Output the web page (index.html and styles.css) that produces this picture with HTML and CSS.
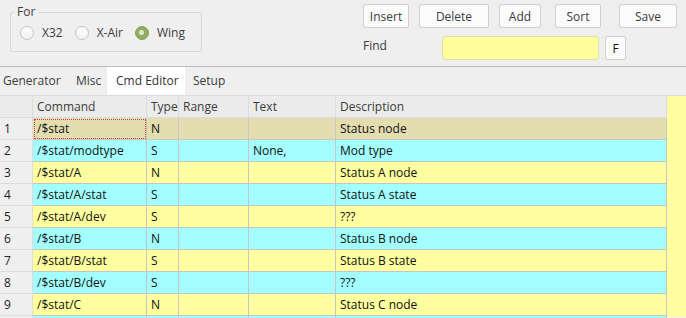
FILE: index.html
```html
<!DOCTYPE html>
<html lang="en">
<head>
  <meta charset="UTF-8" />
  <title>Cmd Editor</title>
  <link rel="stylesheet" href="styles.css">
</head>
<body>
<div class="window">
  <!-- Top bar: target selection + actions -->
  <div class="top">
    <fieldset class="group">
      <legend>For</legend>
      <label class="radio"><span class="dot"></span>X32</label>
      <label class="radio"><span class="dot"></span>X-Air</label>
      <label class="radio"><span class="dot on"></span>Wing</label>
    </fieldset>

    <div class="actions">
      <div class="buttons">
        <button class="btn insert">Insert</button>
        <button class="btn delete">Delete</button>
        <button class="btn add">Add</button>
        <button class="btn sort">Sort</button>
        <button class="btn save">Save</button>
      </div>
      <div class="find">
        <span class="find-label">Find</span>
        <input class="find-input" type="text">
        <button class="btn f">F</button>
      </div>
    </div>
  </div>

  <!-- Tabs -->
  <div class="tabs">
    <div class="tab">Generator</div>
    <div class="tab">Misc</div>
    <div class="tab active">Cmd Editor</div>
    <div class="tab">Setup</div>
  </div>

  <!-- Command table -->
  <div class="table">
    <div class="row head">
      <div class="cell num"></div>
      <div class="cell">Command</div>
      <div class="cell">Type</div>
      <div class="cell">Range</div>
      <div class="cell">Text</div>
      <div class="cell">Description</div>
    </div>
    <div class="row sel">
      <div class="cell num">1</div>
      <div class="cell focus">/$stat</div>
      <div class="cell">N</div>
      <div class="cell"></div>
      <div class="cell"></div>
      <div class="cell">Status node</div>
    </div>
    <div class="row cyan">
      <div class="cell num">2</div>
      <div class="cell">/$stat/modtype</div>
      <div class="cell">S</div>
      <div class="cell"></div>
      <div class="cell">None,</div>
      <div class="cell">Mod type</div>
    </div>
    <div class="row yellow">
      <div class="cell num">3</div>
      <div class="cell">/$stat/A</div>
      <div class="cell">N</div>
      <div class="cell"></div>
      <div class="cell"></div>
      <div class="cell">Status A node</div>
    </div>
    <div class="row cyan">
      <div class="cell num">4</div>
      <div class="cell">/$stat/A/stat</div>
      <div class="cell">S</div>
      <div class="cell"></div>
      <div class="cell"></div>
      <div class="cell">Status A state</div>
    </div>
    <div class="row yellow">
      <div class="cell num">5</div>
      <div class="cell">/$stat/A/dev</div>
      <div class="cell">S</div>
      <div class="cell"></div>
      <div class="cell"></div>
      <div class="cell">???</div>
    </div>
    <div class="row cyan">
      <div class="cell num">6</div>
      <div class="cell">/$stat/B</div>
      <div class="cell">N</div>
      <div class="cell"></div>
      <div class="cell"></div>
      <div class="cell">Status B node</div>
    </div>
    <div class="row yellow">
      <div class="cell num">7</div>
      <div class="cell">/$stat/B/stat</div>
      <div class="cell">S</div>
      <div class="cell"></div>
      <div class="cell"></div>
      <div class="cell">Status B state</div>
    </div>
    <div class="row cyan">
      <div class="cell num">8</div>
      <div class="cell">/$stat/B/dev</div>
      <div class="cell">S</div>
      <div class="cell"></div>
      <div class="cell"></div>
      <div class="cell">???</div>
    </div>
    <div class="row yellow">
      <div class="cell num">9</div>
      <div class="cell">/$stat/C</div>
      <div class="cell">N</div>
      <div class="cell"></div>
      <div class="cell"></div>
      <div class="cell">Status C node</div>
    </div>
    <!-- next row only peeks in at the bottom edge -->
    <div class="row cyan">
      <div class="cell num"></div>
      <div class="cell"></div>
      <div class="cell"></div>
      <div class="cell"></div>
      <div class="cell"></div>
      <div class="cell"></div>
    </div>
  </div>
</div>
</body>
</html>
```

FILE: styles.css
```css
* {
  margin: 0;
  padding: 0;
  box-sizing: border-box;
}

body {
  font-family: "Open Sans", "DejaVu Sans", sans-serif;
  font-size: 12px;
  color: #3c3c3c;
  background: #efefef;
  overflow: hidden;
}

.window {
  width: 686px;
  height: 318px;
  overflow: hidden;
}

/* ---- top area ---- */
.top {
  height: 67px;
  display: flex;
  border-bottom: 1px solid #bcbcbc;
}

.group {
  margin: 6px 0 0 10px;
  width: 192px;
  height: 46px;
  border: 1px solid #d8d8d8;
  border-radius: 2px;
  padding: 0 0 0 9px;
  display: flex;
  align-items: center;
}

.group legend {
  padding: 0 3px;
  margin-left: -6px;
  line-height: 12px;
}

.radio {
  display: flex;
  align-items: center;
  gap: 8px;
  margin-right: 12px;
  margin-top: -4px;
}

.dot {
  width: 14px;
  height: 14px;
  border-radius: 50%;
  border: 1px solid #c4c4c4;
  background: linear-gradient(#fdfdfd, #f2f2f2);
  display: flex;
  align-items: center;
  justify-content: center;
}

.dot.on {
  background: #8fae63;
  border-color: #86a35c;
}

.dot.on::after {
  content: '';
  width: 5px;
  height: 5px;
  border-radius: 50%;
  background: #dfe9cf;
}

.actions {
  margin-left: 161px;
  padding-top: 4px;
}

.buttons {
  display: flex;
  height: 24px;
}

.btn {
  font-family: inherit;
  font-size: 12px;
  color: #3c3c3c;
  background: #fbfbfb;
  border: 1px solid #cfcfcf;
  border-radius: 2px;
  height: 24px;
}

.insert { width: 46px; }
.delete { width: 70px; margin-left: 10px; }
.add { width: 42px; margin-left: 10px; }
.sort { width: 46px; margin-left: 14px; }
.save { width: 58px; margin-left: 18px; }

.find {
  display: flex;
  align-items: flex-start;
  margin-top: 8px;
}

.find-label {
  width: 79px;
  margin-top: 1px;
}

.find-input {
  width: 157px;
  height: 24px;
  background: #ffff9e;
  border: 1px solid #dedea6;
  border-radius: 3px;
  outline: none;
}

.btn.f {
  width: 21px;
  margin-left: 6px;
  color: #111;
}

/* ---- tabs ---- */
.tabs {
  display: flex;
  height: 29px;
  border-bottom: 1px solid #dcdcdc;
}

.tab {
  line-height: 28px;
  white-space: nowrap;
}

.tab:nth-child(1) { width: 66px; padding-left: 3px; }
.tab:nth-child(2) { width: 41px; padding-left: 10px; }
.tab:nth-child(3) { width: 78px; padding-left: 9px; }
.tab:nth-child(4) { padding-left: 8px; }

.tab.active {
  background: #fff;
  color: #333;
}

/* ---- table ---- */
.table {
  background: #ffffa0;
  height: 221px;
}

.row {
  display: grid;
  grid-template-columns: 33px 114px 32px 70px 87px 331px;
  height: 22px;
}

.cell {
  border-right: 1px solid #c6c6c6;
  border-bottom: 1px solid #c6c6c6;
  padding-left: 4px;
  line-height: 21px;
  white-space: nowrap;
  overflow: hidden;
  color: #111;
}

.cell.num {
  background: #efefef;
  border-right-color: #dcdcdc;
  border-bottom-color: #dcdcdc;
  color: #222;
}

.head .cell {
  background: #ebebeb;
  color: #3c3c3c;
  border-right-color: #dcdcdc;
  border-bottom-color: #dcdcdc;
}

.row.sel .cell { background: #e3ddb0; }
.row.sel .cell.num { background: #efefef; }
.row.yellow .cell { background: #ffffa0; }
.row.cyan .cell { background: #a3ffff; }
.row.yellow .cell.num,
.row.cyan .cell.num { background: #efefef; }

.cell.focus {
  outline: 1px dotted #d23c3c;
  outline-offset: -2px;
}
```
